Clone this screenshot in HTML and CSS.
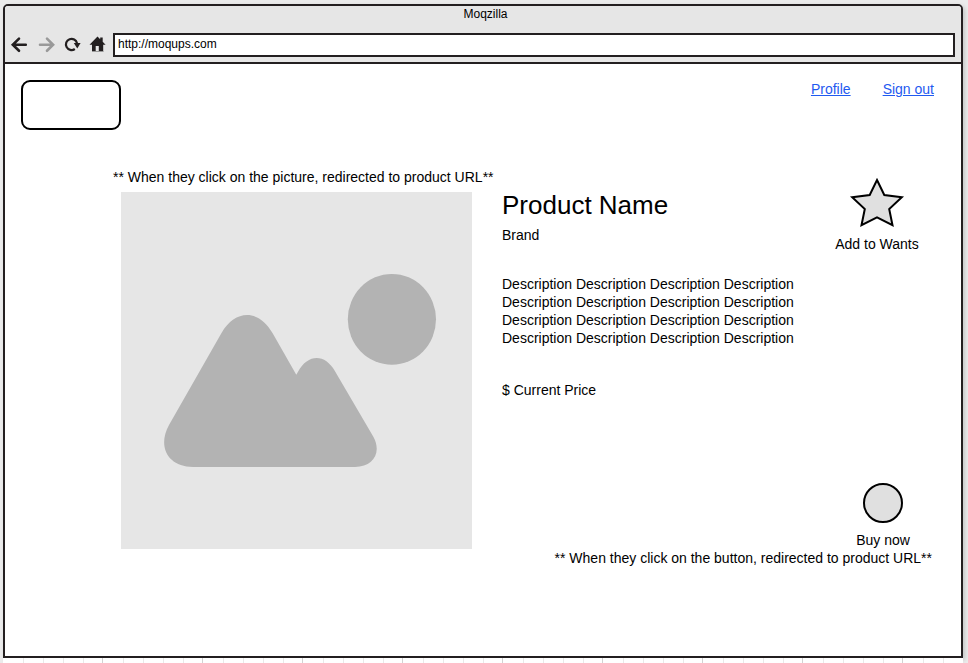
FILE: index.html
```html
<!DOCTYPE html>
<html lang="en">
<head>
<meta charset="utf-8">
<title>Moqzilla</title>
<link rel="stylesheet" href="styles.css">
</head>
<body>
<div class="window">
  <header class="chrome">
    <div class="window-title">Moqzilla</div>
    <div class="toolbar">
      <svg class="nav-icons" width="106" height="24" viewBox="5 33 106 24" fill="none">
        <g stroke-width="2.6" stroke-linecap="round">
          <path stroke="#231f20" d="M25.8 44.8H13M19 38.6L12.8 44.8L19 50.8"/>
          <path stroke="#999" d="M40 44.8H52.8M47 38.6L53.1 44.8L47 50.8"/>
        </g>
        <path stroke="#231f20" stroke-width="2.2" d="M74.8 49A5.6 5.6 0 1 1 77 43.2"/>
        <path fill="#231f20" d="M73.8 42.9H80.6L77.3 48.6Z"/>
        <path fill="#231f20" d="M97.5 36.6L100.2 39.3V37.4H102.7V41.8L105.6 44.8H103.2V52H92V44.8H89.5Z"/>
        <path fill="#e6e6e6" d="M95.7 46H98.8V51H95.7Z"/>
        <path stroke="#999" d="M92 51.5H103.2"/>
      </svg>
      <div class="address">http://moqups.com</div>
    </div>
  </header>
  <main class="page">
    <div class="topbar">
      <div class="logo"></div>
      <nav class="links"><a href="#">Profile</a><a href="#">Sign out</a></nav>
    </div>
    <p class="picture-note">** When they click on the picture, redirected to product URL**</p>
    <section class="product">
      <svg class="picture" width="351" height="357" viewBox="121 192 351 357">
        <path fill="#e6e6e6" d="M121 192H472V549H121Z"/>
        <ellipse fill="#b3b3b3" cx="391.9" cy="319.3" rx="44.1" ry="45.4"/>
        <path fill="#b3b3b3" d="M193 467C168 467 157 447 169 425L221.5 333C235 309 259 309 272.5 333L296.3 374.7L298 371.7C308 353.5 325 353.5 335 371.2L373.5 437C382 453 373 467 355 467Z"/>
      </svg>
      <div class="details">
        <h1>Product Name</h1>
        <p class="brand">Brand</p>
        <p class="description">Description Description Description Description Description Description Description Description Description Description Description Description Description Description Description Description</p>
        <p class="price">$ Current Price</p>
      </div>
      <div class="wants">
        <svg width="56" height="52" viewBox="849 177 56 52"><path fill="#e0e0e0" stroke="#000" stroke-width="2" d="M877 180L884.3 195L901.8 197.3L889.2 209L892.5 225.2L877 217.4L861.5 225.2L864.8 209L852.2 197.3L869.7 195Z"/></svg>
        <span>Add to Wants</span>
      </div>
      <div class="buy">
        <div class="buy-button"></div>
        <span>Buy now</span>
      </div>
    </section>
    <p class="button-note">** When they click on the button, redirected to product URL**</p>
  </main>
</div>
<svg class="ruler" width="960" height="5">
  <defs>
    <pattern id="ticks" width="100" height="5" patternUnits="userSpaceOnUse">
      <path fill="#e9e9e9" d="M20 0h1v5h-1zM40 0h1v5h-1zM60 0h1v5h-1zM80 0h1v5h-1z"/>
      <path fill="#d2d2d2" d="M99 0h1v5h-1z"/>
    </pattern>
  </defs>
  <rect width="960" height="5" fill="url(#ticks)"/>
</svg>
</body>
</html>
```
FILE: styles.css
```css
* {
  box-sizing: border-box;
}

body {
  margin: 0;
  height: 663px;
  padding: 4px 5px 0 3px;
  overflow: hidden;
  background: #ebebeb;
  color: #000;
  font: 14px/18px "Liberation Sans", Arial, sans-serif;
}

h1,
p {
  margin: 0;
}

svg {
  display: block;
}

.window {
  width: 960px;
  height: 654px;
  overflow: hidden;
  border: 2px solid #231f20;
  border-radius: 5px 5px 0 0;
  background: #fff;
  box-shadow: 2px 2px 4px rgba(0, 0, 0, 0.16);
}

.chrome {
  height: 58px;
  border-bottom: 2px solid #231f20;
  background: #e6e6e6;
  font-size: 12px;
}

.window-title {
  height: 27px;
  padding-left: 5px;
  line-height: 16px;
  text-align: center;
}

.toolbar {
  display: flex;
  gap: 2px;
  padding-right: 6px;
}

.address {
  flex: 1;
  height: 24px;
  padding-left: 3px;
  border: 2px solid #231f20;
  background: #fff;
  line-height: 19px;
}

.page {
  padding: 16px 26px 0 16px;
}

.topbar {
  display: flex;
  justify-content: space-between;
}

.logo {
  width: 100px;
  height: 50px;
  border: 2px solid #000;
  border-radius: 9px;
}

.links {
  display: flex;
  gap: 32px;
  margin-right: 1px;
}

.links a {
  color: #1f5af0;
}

.picture-note {
  margin: 38px 0 6px 92px;
}

.product {
  display: grid;
  grid-template-columns: 351px 1fr 120px;
  grid-template-rows: auto 1fr;
  margin-left: 100px;
}

.picture {
  grid-row: 1 / 3;
}

.details {
  grid-row: 1 / 3;
  width: 325px;
  padding-left: 30px;
}

.details h1 {
  font-size: 26px;
  font-weight: 400;
  line-height: 26px;
}

.brand {
  margin-top: 8px;
}

.description {
  margin-top: 31px;
}

.price {
  margin-top: 34px;
}

.wants,
.buy {
  display: flex;
  flex-direction: column;
  align-items: center;
  grid-column: 3;
}

.wants {
  margin-top: -15px;
  padding-left: 4px;
}

.wants span {
  margin-top: 6px;
}

.buy {
  align-self: end;
  padding-left: 16px;
}

.buy-button {
  width: 40px;
  height: 40px;
  margin-bottom: 8px;
  border: 2px solid #000;
  border-radius: 50%;
  background: #e0e0e0;
}

.button-note {
  margin-right: 3px;
  text-align: right;
}

.ruler {
  position: relative;
  background: #fff;
}
```
